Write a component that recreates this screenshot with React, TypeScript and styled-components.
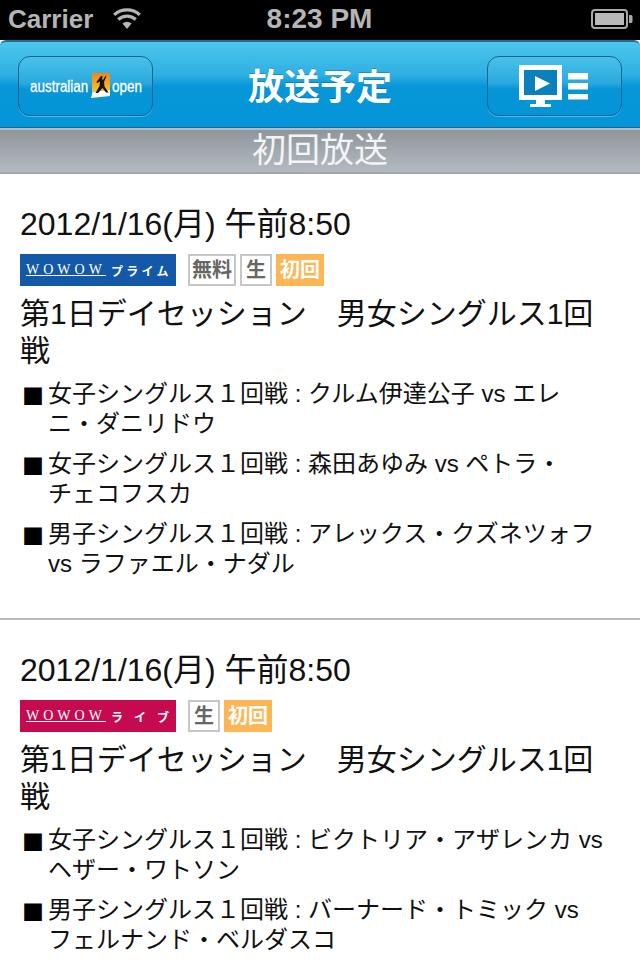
import { FC } from 'react'
import styled, { createGlobalStyle } from 'styled-components'

interface Broadcast {
  channel: string
  color: string
  spacing: number
  free?: boolean
  matches: string[]
}

const broadcasts: Broadcast[] = [
  {
    channel: 'プライム',
    color: '#1359a8',
    spacing: 3.3,
    free: true,
    matches: [
      '女子シングルス１回戦 : クルム伊達公子 vs エレ\nニ・ダニリドウ',
      '女子シングルス１回戦 : 森田あゆみ vs ペトラ・\nチェコフスカ',
      '男子シングルス１回戦 : アレックス・クズネツォフ\nvs ラファエル・ナダル',
    ],
  },
  {
    channel: 'ライブ',
    color: '#c50a50',
    spacing: 11,
    matches: [
      '女子シングルス１回戦 : ビクトリア・アザレンカ vs\nヘザー・ワトソン',
      '男子シングルス１回戦 : バーナード・トミック vs\nフェルナンド・ベルダスコ',
    ],
  },
]

const WifiIcon = () => (
  <svg width="30" height="22" viewBox="0 0 32 24">
    <path d="M16 23l-5-6a7.5 7.5 0 0 1 10 0z" fill="#b5b5b5" />
    <path d="M6.5 12.5a14 14 0 0 1 19 0" fill="none" stroke="#b5b5b5" strokeWidth="3.6" />
    <path d="M2 7.5a21 21 0 0 1 28 0" fill="none" stroke="#b5b5b5" strokeWidth="3.6" />
  </svg>
)

const BatteryIcon = () => (
  <svg width="42" height="20" viewBox="0 0 42 20">
    <rect x="1" y="1" width="35" height="18" rx="3" fill="none" stroke="#a8a8a8" strokeWidth="2" />
    <rect x="4" y="4" width="29" height="12" fill="#b9b9b9" />
    <path d="M38 6h2a1.5 1.5 0 0 1 1.5 1.5v5a1.5 1.5 0 0 1-1.5 1.5h-2z" fill="#a8a8a8" />
  </svg>
)

const PlayerIcon = () => (
  <svg width="70" height="42" viewBox="0 0 70 42">
    <path d="M0 0h43v35H26v4h6v3H11v-3h6v-4H0z" fill="#fff" />
    <rect x="5" y="5" width="33" height="25" fill="#0a81bd" />
    <path d="M16 11l15 7.5-15 7.5z" fill="#fff" />
    <path d="M49 8h20v6.5H49zM49 18h20v6.5H49zM49 29h20v5.5H49z" fill="#fff" />
  </svg>
)

const LogoMark = () => (
  <svg width="19" height="25" viewBox="0 0 19 25">
    <defs>
      <linearGradient id="sun" x1="0" y1="0" x2="0" y2="1">
        <stop offset="0" stopColor="#e9861a" />
        <stop offset="1" stopColor="#fbc52d" />
      </linearGradient>
    </defs>
    <path d="M1 0h18v17L1 19z" fill="url(#sun)" />
    <path d="M0 25l1.500-6 17.500-2v6z" fill="#fff" />
    <path
      d="M10 3l1.600.3-.6 3 1 .7 2.500-4 .8.500-2.300 5.500.5 4.500 4 6h-2.500l-3.500-4.500-4.500 5H4.500l4-7 .5-4.500-3 1.500-.7-.8z"
      fill="#17120c"
    />
  </svg>
)

const ChannelBadge: FC<{ name: string; color: string; spacing: number }> = ({
  name,
  color,
  spacing,
}) => (
  <Channel $color={color}>
    <ChannelLogo>WOWOW</ChannelLogo>
    <ChannelName $spacing={spacing}>{name}</ChannelName>
  </Channel>
)

const ProgramCard: FC<{ item: Broadcast }> = ({ item }) => (
  <Card>
    <DateLine>2012/1/16(月) 午前8:50</DateLine>
    <Badges>
      <ChannelBadge name={item.channel} color={item.color} spacing={item.spacing} />
      <Tags>
        {item.free && <Tag>無料</Tag>}
        <Tag>生</Tag>
        <FirstTag>初回</FirstTag>
      </Tags>
    </Badges>
    <Title>第1日デイセッション　男女シングルス1回戦</Title>
    <MatchList>
      {item.matches.map((match) => (
        <Match key={match}>
          <Bullet>■</Bullet>
          <MatchText>{match}</MatchText>
        </Match>
      ))}
    </MatchList>
  </Card>
)

export default function App() {
  return (
    <Screen>
      <GlobalStyle />
      <StatusBar>
        <StatusLeft>
          <span>Carrier</span>
          <WifiIcon />
        </StatusLeft>
        <Clock>8:23 PM</Clock>
        <BatteryIcon />
      </StatusBar>
      <NavBar>
        <NavButton>
          <Wordmark $width={59}>australian</Wordmark>
          <LogoMark />
          <Wordmark $width={29}>open</Wordmark>
        </NavButton>
        <NavTitle>放送予定</NavTitle>
        <NavButton>
          <PlayerIcon />
        </NavButton>
      </NavBar>
      <SectionHeader>初回放送</SectionHeader>
      {broadcasts.map((item) => (
        <ProgramCard key={item.channel} item={item} />
      ))}
    </Screen>
  )
}

const GlobalStyle = createGlobalStyle`
  html, body {
    margin: 0;
    padding: 0;
    background: #fff;
  }
  body {
    font-family: "Liberation Sans", "Noto Sans CJK JP", sans-serif;
  }
`

const Screen = styled.div`
  width: 640px;
  height: 960px;
  overflow: hidden;
  background: #fff;
`

const StatusBar = styled.div`
  height: 40px;
  padding: 0 7px 2px 8px;
  box-sizing: border-box;
  display: grid;
  grid-template-columns: 1fr auto 1fr;
  align-items: center;
  background: #000;
  color: #b5b5b5;
  font-size: 28px;
  font-weight: 700;

  svg:last-child {
    justify-self: end;
  }
`

const StatusLeft = styled.div`
  display: flex;
  align-items: center;
  gap: 19px;
  font-size: 26px;
`

const Clock = styled.div`
  margin-left: -2px;
`

const NavBar = styled.div`
  height: 88px;
  padding: 2px 18px 0;
  box-sizing: border-box;
  display: flex;
  align-items: center;
  justify-content: space-between;
  border-top: 2px solid #1d6f97;
  border-bottom: 1px solid #0a6b9f;
  border-radius: 6px 6px 0 0;
  background: linear-gradient(#4dc7ec 0%, #2fb0e2 38%, #0797d9 52%, #0495d8 100%);
`

const NavButton = styled.div`
  width: 135px;
  height: 60px;
  box-sizing: border-box;
  display: flex;
  align-items: center;
  justify-content: center;
  gap: 2px;
  border: 1px solid #17638c;
  border-radius: 12px;
  box-shadow: 0 1px 0 rgba(255, 255, 255, 0.3);
  background: linear-gradient(#49c2ea 0%, #2aa9de 45%, #0695d7 55%, #0495d8 100%);
`

const NavTitle = styled.div`
  margin-top: -4px;
  color: #fff;
  font-size: 36px;
  font-weight: 700;
  text-shadow: 0 -1px 0 rgba(0, 0, 0, 0.2);
`

const Wordmark = styled.span<{ $width: number }>`
  width: ${(p) => p.$width}px;
  color: #fff;
  font-size: 16px;
  -webkit-text-stroke: 0.3px #fff;
  white-space: nowrap;
  transform: translateY(1px) scaleX(0.84);
  transform-origin: left center;
`

const SectionHeader = styled.div`
  height: 46px;
  box-sizing: border-box;
  border-top: 2px solid #b7bcc1;
  border-bottom: 2px solid #a2a7ab;
  background: linear-gradient(#8f969b, #b3bac1);
  color: #f2f4f6;
  font-size: 34px;
  line-height: 40px;
  text-align: center;
`

const Card = styled.div`
  padding: 30px 20px 39px;
  border-bottom: 2px solid #b9b9b9;
`

const DateLine = styled.div`
  color: #111;
  font-size: 32px;
  line-height: 40px;
`

const Badges = styled.div`
  margin-top: 10px;
  display: flex;
  gap: 12px;
`

const Channel = styled.div<{ $color: string }>`
  width: 156px;
  height: 32px;
  padding-left: 6px;
  box-sizing: border-box;
  display: flex;
  align-items: center;
  gap: 5px;
  background: ${(p) => p.$color};
  color: #fff;
`

const ChannelLogo = styled.span`
  font-family: "Liberation Serif", serif;
  font-size: 14px;
  letter-spacing: 4px;
  text-decoration: underline;
  text-decoration-thickness: 1px;
  text-underline-offset: 1px;
`

const ChannelName = styled.span<{ $spacing: number }>`
  font-size: 12px;
  font-weight: 700;
  letter-spacing: ${(p) => p.$spacing}px;
  white-space: nowrap;
`

const Tags = styled.div`
  display: flex;
  gap: 4px;
`

const Tag = styled.span`
  min-width: 32px;
  height: 32px;
  padding: 0 2px;
  box-sizing: border-box;
  border: 2px solid #c6c6c6;
  color: #666;
  font-size: 20px;
  font-weight: 700;
  line-height: 28px;
  text-align: center;
`

const FirstTag = styled(Tag)`
  border-color: #fdb654;
  background: #fdb654;
  color: #fff;
`

const Title = styled.div`
  margin-top: 9px;
  color: #111;
  font-size: 30px;
  line-height: 37px;
`

const MatchList = styled.div`
  margin-top: 10px;
  display: flex;
  flex-direction: column;
  gap: 10px;
`

const Match = styled.div`
  display: flex;
  gap: 4px;
  color: #111;
  font-size: 24px;
  line-height: 30px;
`

const Bullet = styled.span`
  flex: none;
  width: 22px;
  margin-left: 2px;
  color: #000;
  font-family: "Noto Sans CJK JP", sans-serif;
  font-size: 22px;
`

const MatchText = styled.span`
  white-space: pre-line;
`
